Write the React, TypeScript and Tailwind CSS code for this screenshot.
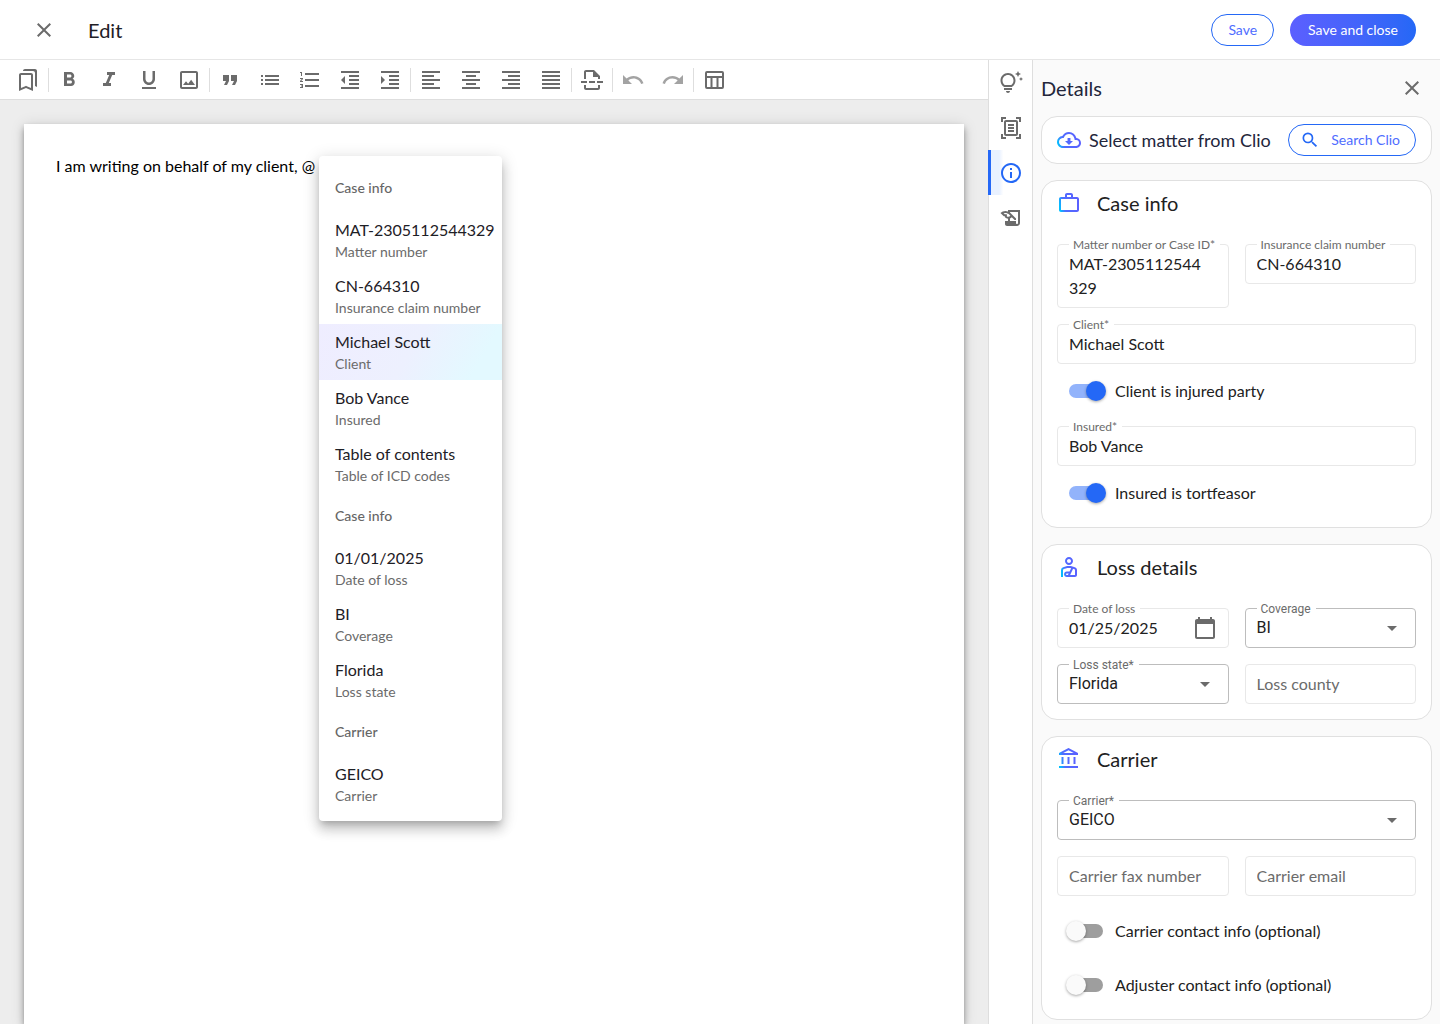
import { useState, type ReactNode } from "react";
import {
  MdArrowDropDown,
  MdCalendarToday,
  MdClose,
  MdFormatAlignCenter,
  MdFormatAlignJustify,
  MdFormatAlignLeft,
  MdFormatAlignRight,
  MdFormatBold,
  MdFormatIndentDecrease,
  MdFormatIndentIncrease,
  MdFormatItalic,
  MdFormatListNumbered,
  MdFormatQuote,
  MdFormatUnderlined,
  MdList,
  MdOutlineAccountBalance,
  MdOutlineBookmarks,
  MdOutlineCloudDownload,
  MdOutlineDocumentScanner,
  MdOutlineHistoryEdu,
  MdOutlineImage,
  MdOutlineInfo,
  MdOutlineInsertPageBreak,
  MdOutlinePersonalInjury,
  MdOutlineTipsAndUpdates,
  MdOutlineWorkOutline,
  MdRedo,
  MdSearch,
  MdUndo,
} from "react-icons/md";

function TableIcon() {
  return (
    <svg width="24" height="24" viewBox="0 0 24 24" fill="none" stroke="currentColor" strokeWidth="2" aria-hidden="true">
      <rect x="4" y="4" width="17" height="16" rx="1" />
      <path d="M4 9h17M9.5 9v11M15.5 9v11" />
    </svg>
  );
}

type Tool = { label: string; icon: ReactNode; disabled?: boolean };

const toolGroups: Tool[][] = [
  [{ label: "Bookmarks", icon: <MdOutlineBookmarks /> }],
  [
    { label: "Bold", icon: <MdFormatBold /> },
    { label: "Italic", icon: <MdFormatItalic /> },
    { label: "Underline", icon: <MdFormatUnderlined /> },
    { label: "Image", icon: <MdOutlineImage /> },
  ],
  [
    { label: "Quote", icon: <MdFormatQuote /> },
    { label: "Bulleted list", icon: <MdList /> },
    { label: "Numbered list", icon: <MdFormatListNumbered /> },
    { label: "Decrease indent", icon: <MdFormatIndentDecrease /> },
    { label: "Increase indent", icon: <MdFormatIndentIncrease /> },
  ],
  [
    { label: "Align left", icon: <MdFormatAlignLeft /> },
    { label: "Align center", icon: <MdFormatAlignCenter /> },
    { label: "Align right", icon: <MdFormatAlignRight /> },
    { label: "Justify", icon: <MdFormatAlignJustify /> },
  ],
  [{ label: "Page break", icon: <MdOutlineInsertPageBreak /> }],
  [
    { label: "Undo", icon: <MdUndo />, disabled: true },
    { label: "Redo", icon: <MdRedo />, disabled: true },
  ],
  [{ label: "Table", icon: <TableIcon /> }],
];

function Toolbar() {
  return (
    <div role="toolbar" aria-label="Formatting" className="flex h-10 shrink-0 items-center border-b border-[#dedede] bg-white px-2">
      {toolGroups.map((group, i) => (
        <div key={i} className={i === 0 ? "flex" : "flex items-center before:h-6 before:w-px before:bg-[#dedede]"}>
          {group.map((tool) => (
            <button
              key={tool.label}
              type="button"
              aria-label={tool.label}
              disabled={tool.disabled}
              className="flex h-10 w-10 items-center justify-center text-2xl text-[#6b6b6b] disabled:text-[#a3a3a3]"
            >
              {tool.icon}
            </button>
          ))}
        </div>
      ))}
    </div>
  );
}

const mentionGroups = [
  {
    title: "Case info",
    items: [
      ["MAT-2305112544329", "Matter number"],
      ["CN-664310", "Insurance claim number"],
      ["Michael Scott", "Client"],
      ["Bob Vance", "Insured"],
      ["Table of contents", "Table of ICD codes"],
    ],
  },
  {
    title: "Case info",
    items: [
      ["01/01/2025", "Date of loss"],
      ["BI", "Coverage"],
      ["Florida", "Loss state"],
    ],
  },
  { title: "Carrier", items: [["GEICO", "Carrier"]] },
];

function MentionMenu() {
  return (
    <div className="absolute left-[295px] top-8 w-[183px] rounded bg-white pt-2 pb-[9px] shadow-[0_5px_6px_-3px_rgba(0,0,0,0.2),0_9px_12px_1px_rgba(0,0,0,0.14),0_3px_16px_2px_rgba(0,0,0,0.12)]">
      {mentionGroups.map((group, i) => (
        <section key={i}>
          <h3 className="flex h-12 items-center px-4 text-sm font-medium text-[#666]">{group.title}</h3>
          <ul>
            {group.items.map(([value, name]) => (
              <li key={name}>
                <button
                  type="button"
                  className={
                    value === "Michael Scott"
                      ? "block h-14 w-full bg-[linear-gradient(120deg,#efedff_0%,#edf0fe_50%,#e3f9ff_85%)] px-4 text-left"
                      : "block h-14 w-full px-4 text-left"
                  }
                >
                  <span className="block text-base leading-6 whitespace-nowrap text-[#1e2026]">{value}</span>
                  <span className="block text-sm leading-5 whitespace-nowrap text-[#6b6b6b]">{name}</span>
                </button>
              </li>
            ))}
          </ul>
        </section>
      ))}
    </div>
  );
}

function Rail() {
  const items = [
    { label: "Suggestions", icon: <MdOutlineTipsAndUpdates /> },
    { label: "Documents", icon: <MdOutlineDocumentScanner /> },
    { label: "Details", icon: <MdOutlineInfo /> },
    { label: "Drafting", icon: <MdOutlineHistoryEdu /> },
  ];
  return (
    <nav aria-label="Panels" className="flex w-[45px] shrink-0 flex-col border-x border-[#dedede] bg-white">
      {items.map((item) => (
        <button
          key={item.label}
          type="button"
          aria-label={item.label}
          className={
            item.label === "Details"
              ? "-ml-px flex h-[45px] items-center justify-center border-l-3 border-[#2468f6] bg-linear-to-r from-[#e9f1ff] from-20% to-white to-30% pr-0.5 text-2xl text-[#2468f6]"
              : "flex h-[45px] items-center justify-center text-2xl text-[#6b6b6b]"
          }
        >
          {item.icon}
        </button>
      ))}
    </nav>
  );
}

function GradientIcon({ children }: { children: ReactNode }) {
  return <span className="text-2xl [&_path:not([fill])]:fill-[url(#brand)]">{children}</span>;
}

function Card({ icon, title, children }: { icon: ReactNode; title: string; children: ReactNode }) {
  return (
    <section className="rounded-2xl border border-[#e0e0e0] bg-white px-[15px] pb-[15px]">
      <div className="flex h-11 items-center gap-4">
        <GradientIcon>{icon}</GradientIcon>
        <h2 className="text-xl text-[#212121]">{title}</h2>
      </div>
      <div className="mt-[19px] grid grid-cols-2 items-start gap-4">{children}</div>
    </section>
  );
}

function FieldLabel({ id, text, roboto }: { id: string; text: string; roboto?: boolean }) {
  return (
    <label
      htmlFor={id}
      className={
        roboto
          ? "absolute -top-[7px] left-3 bg-white pr-[5px] pl-1 font-[Roboto,sans-serif] text-xs leading-4 whitespace-nowrap text-[#6b6b6b]"
          : "absolute -top-[7px] left-3 bg-white pr-[5px] pl-1 text-xs leading-4 whitespace-nowrap text-[#6b6b6b]"
      }
    >
      {text}
    </label>
  );
}

type FieldProps = { id: string; label: string; value?: string; wide?: boolean; multiline?: boolean; calendar?: boolean };

function TextField({ id, label, value, wide, multiline, calendar }: FieldProps) {
  const control = "block w-full rounded border border-[#e8e8e8] bg-white px-[11px] text-base text-[#212121] outline-none placeholder:text-[#6b6b6b]";
  return (
    <div className={wide ? "relative col-span-2" : "relative"}>
      {multiline ? (
        <textarea id={id} rows={2} defaultValue={value} className={`${control} h-16 resize-none overflow-hidden pt-[7px] pr-5 leading-6 break-all`} />
      ) : (
        <input id={id} type="text" defaultValue={value} placeholder={value ? undefined : label} aria-label={value ? undefined : label} className={`${control} h-10 pb-0.5`} />
      )}
      {value && <FieldLabel id={id} text={label} />}
      {calendar && (
        <button type="button" aria-label="Choose date" className="absolute top-2 right-3 text-2xl text-[#6b6b6b]">
          <MdCalendarToday />
        </button>
      )}
    </div>
  );
}

function SelectField({ id, label, value, wide }: FieldProps) {
  return (
    <div className={wide ? "relative col-span-2" : "relative"}>
      <select
        id={id}
        defaultValue={value}
        className="block h-10 w-full appearance-none rounded border border-[#bdbdbd] bg-white px-[11px] font-[Roboto,sans-serif] text-base text-[#212121] outline-none"
      >
        <option>{value}</option>
      </select>
      <FieldLabel id={id} text={label} roboto />
      <MdArrowDropDown className="pointer-events-none absolute top-2 right-3 text-2xl text-[#6b6b6b]" />
    </div>
  );
}

function Toggle({ label, on = false, tight = false }: { label: string; on?: boolean; tight?: boolean }) {
  const [checked, setChecked] = useState(on);
  return (
    <label className={tight ? "col-span-2 -mt-2 flex h-[38px] items-center gap-3 pl-3" : "col-span-2 flex h-[38px] items-center gap-3 pl-3"}>
      <input
        type="checkbox"
        role="switch"
        checked={checked}
        onChange={(e) => setChecked(e.target.checked)}
        className="relative h-3.5 w-[34px] shrink-0 appearance-none rounded-full bg-[#9e9e9e] before:absolute before:-top-[3px] before:-left-[3px] before:size-5 before:rounded-full before:bg-[#fafafa] before:shadow-[0_1px_3px_rgba(0,0,0,0.35)] checked:bg-[#92b3fb] checked:before:left-[17px] checked:before:bg-[#2468f6]"
      />
      <span className="text-base text-[#212121]">{label}</span>
    </label>
  );
}

function DetailsPanel() {
  return (
    <aside className="flex w-[407px] shrink-0 flex-col overflow-y-auto bg-[#fafafa] px-2 pb-1">
      <svg width="0" height="0" className="absolute" aria-hidden="true">
        <linearGradient id="brand" x1="0" y1="0.6" x2="1" y2="0.4">
          <stop offset="0" stopColor="#00c0ff" />
          <stop offset="0.25" stopColor="#4f6dff" />
          <stop offset="1" stopColor="#5b5fff" />
        </linearGradient>
      </svg>
      <header className="flex h-14 shrink-0 items-center justify-between pr-2">
        <h1 className="text-xl text-[#23263b]">Details</h1>
        <button type="button" aria-label="Close details" className="text-2xl text-[#6b6b6b]">
          <MdClose />
        </button>
      </header>
      <div className="flex flex-col gap-4">
        <section className="flex h-12 items-center rounded-2xl border border-[#e0e0e0] bg-white px-[15px]">
          <GradientIcon>
            <MdOutlineCloudDownload />
          </GradientIcon>
          <h2 className="ml-2 flex-1 text-lg whitespace-nowrap text-[#23263b]">Select matter from Clio</h2>
          <button type="button" className="flex h-8 w-32 items-center justify-between rounded-full border border-[#2468f6] pr-[15px] pl-[11px] text-sm text-[#4f6dff]">
            <MdSearch className="text-xl text-[#2468f6]" />
            Search Clio
          </button>
        </section>

        <Card icon={<MdOutlineWorkOutline />} title="Case info">
          <TextField id="matter" label="Matter number or Case ID*" value="MAT-2305112544329" multiline />
          <TextField id="claim" label="Insurance claim number" value="CN-664310" />
          <TextField id="client" label="Client*" value="Michael Scott" wide />
          <Toggle label="Client is injured party" on tight />
          <TextField id="insured" label="Insured*" value="Bob Vance" wide />
          <Toggle label="Insured is tortfeasor" on tight />
        </Card>

        <Card icon={<MdOutlinePersonalInjury />} title="Loss details">
          <TextField id="loss-date" label="Date of loss" value="01/25/2025" calendar />
          <SelectField id="coverage" label="Coverage" value="BI" />
          <SelectField id="state" label="Loss state*" value="Florida" />
          <TextField id="county" label="Loss county" />
        </Card>

        <Card icon={<MdOutlineAccountBalance />} title="Carrier">
          <SelectField id="carrier" label="Carrier*" value="GEICO" wide />
          <TextField id="fax" label="Carrier fax number" />
          <TextField id="email" label="Carrier email" />
          <Toggle label="Carrier contact info (optional)" />
          <Toggle label="Adjuster contact info (optional)" />
        </Card>
      </div>
    </aside>
  );
}

export default function App() {
  return (
    <div className="flex h-screen flex-col overflow-hidden bg-white font-[Lato,sans-serif]">
      <header className="flex h-[60px] shrink-0 items-center border-b border-[#e6e6e6] px-6">
        <button type="button" aria-label="Close" className="flex w-10 justify-center text-2xl text-[#6b6b6b]">
          <MdClose />
        </button>
        <h1 className="ml-6 flex-1 text-xl text-[#1e2026]">Edit</h1>
        <div className="flex gap-4">
          <button type="button" className="h-8 rounded-full border border-[#2468f6] px-4 text-sm text-[#4f6dff]">
            Save
          </button>
          <button type="button" className="h-8 rounded-full bg-linear-to-r from-[#5b5fff] to-[#2468f6] px-[18px] text-sm text-white">
            Save and close
          </button>
        </div>
      </header>
      <div className="flex min-h-0 flex-1">
        <main className="flex min-w-0 flex-1 flex-col">
          <Toolbar />
          <div className="flex min-h-0 flex-1 overflow-hidden bg-[#ededed] px-6 pt-6">
            <article className="relative flex-1 bg-white p-8 shadow-[0_3px_5px_-1px_rgba(0,0,0,0.3),0_5px_8px_rgba(0,0,0,0.2),0_1px_14px_rgba(0,0,0,0.12)]">
              <p className="text-base leading-5 text-black">I am writing on behalf of my client, @</p>
              <MentionMenu />
            </article>
          </div>
        </main>
        <Rail />
        <DetailsPanel />
      </div>
    </div>
  );
}
